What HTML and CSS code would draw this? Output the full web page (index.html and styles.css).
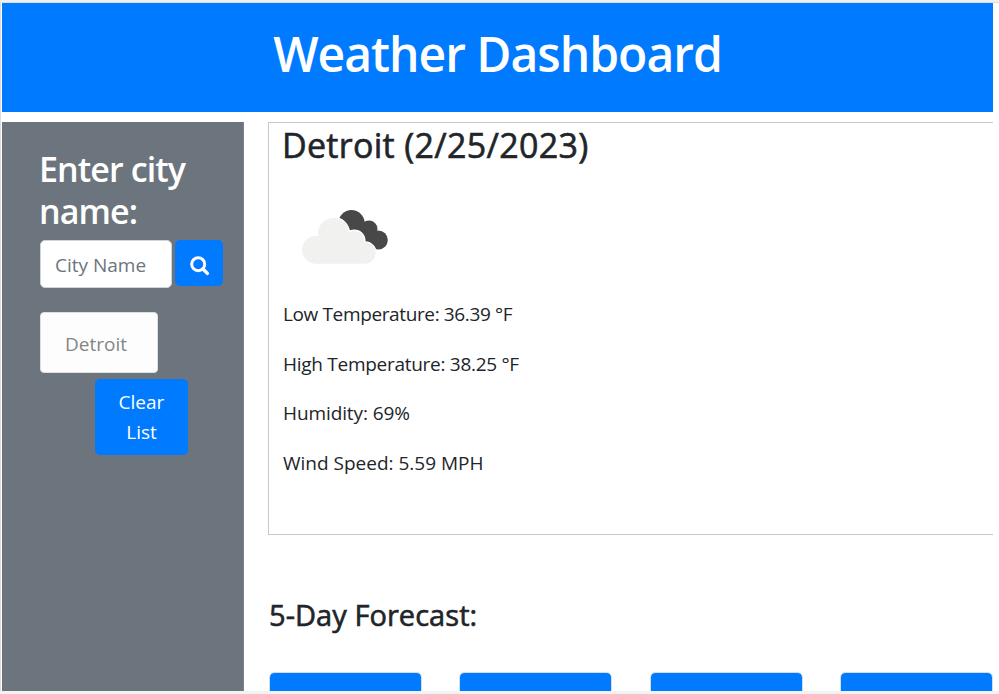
FILE: index.html
```html
<!DOCTYPE html>
<html lang="en">
<head>
<meta charset="utf-8">
<title>Weather Dashboard</title>
<link rel="stylesheet" href="styles.css">
</head>
<body>
<div class="page">
  <header class="banner"><h1>Weather Dashboard</h1></header>
  <div class="columns">
    <aside class="sidebar">
      <h2>Enter city name:</h2>
      <form class="search">
        <input type="text" placeholder="City Name" aria-label="City Name">
        <button type="button" class="btn find" aria-label="Search">
          <svg viewBox="0 0 20 20" width="20" height="20"><circle cx="8.2" cy="8.2" r="6.5" fill="none" stroke="#fff" stroke-width="3"/><path d="M13 13L17.4 17.4" stroke="#fff" stroke-width="3.4" stroke-linecap="round"/></svg>
        </button>
      </form>
      <div class="history">Detroit</div>
      <button type="button" class="btn clear">Clear<br>List</button>
    </aside>
    <main class="main">
      <section class="current">
        <h2>Detroit (2/25/2023)</h2>
        <svg class="cloud" viewBox="300 205 92 62" width="92" height="62">
          <g fill="#484849"><circle cx="351.5" cy="223.3" r="13.2"/><circle cx="369" cy="229" r="8.5"/><circle cx="378.3" cy="240" r="9.5"/><path d="M350 225L369 225L378 238L374 248L350 240Z"/></g>
          <g fill="#f1f1ef" stroke="#fff" stroke-width="1.8"><circle cx="333.5" cy="233.5" r="15.8"/><circle cx="354.3" cy="240.8" r="10.4"/><circle cx="365" cy="253" r="10.8"/></g>
          <g fill="#f1f1ef"><circle cx="316" cy="249.8" r="13.9"/><circle cx="333.5" cy="233.5" r="15.4"/><circle cx="354.3" cy="240.8" r="9.8"/><circle cx="365" cy="253" r="10.7"/><path d="M316 245H362V263.7H316Z"/></g>
        </svg>
        <p class="low">Low Temperature: 36.39 °F</p>
        <p class="high">High Temperature: 38.25 °F</p>
        <p class="humidity">Humidity: 69%</p>
        <p class="wind">Wind Speed: 5.59 MPH</p>
      </section>
      <h3>5-Day Forecast:</h3>
      <div class="cards">
        <div class="card"></div><div class="card"></div><div class="card"></div><div class="card"></div>
      </div>
    </main>
  </div>
</div>
</body>
</html>
```

FILE: styles.css
```css
* { box-sizing: border-box; }
body {
  margin: 0;
  height: 694px;
  overflow: hidden;
  background: #fff;
  color: #212529;
  font: 19px/30px "Open Sans", "Noto Sans", sans-serif;
  border-top: 2px solid #f0f0f0;
  border-bottom: 3px solid #f2f2f2;
}
h1, h2, h3, p { margin: 0; white-space: nowrap; }
h1, h2, h3 { font-weight: 500; }
.page {
  height: 689px;
  overflow: hidden;
  padding: 0 6px 0 1px;
  border-top: 1px solid #ddd;
  border-left: 1px solid #ddd;
}
.banner { height: 109px; padding-top: 21px; background: #007bff; color: #fff; text-align: center; }
.banner h1 { font-size: 48px; line-height: 60px; font-weight: 600; letter-spacing: -1px; }
.columns { display: flex; gap: 24px; height: 569px; margin-top: 10px; }
.sidebar { flex: none; width: 242px; padding: 26px 20px 0 38px; background: #6c757d; border-right: 1px solid #7b838a; }
.sidebar h2 { margin-left: -1px; color: #fff; font-size: 34px; line-height: 42px; font-weight: 600; letter-spacing: -0.9px; white-space: normal; }
.search { display: flex; gap: 3px; margin-top: 8px; }
.search input {
  width: 132px; height: 48px; padding: 2px 14px 0;
  border: 1px solid #ced4da; border-radius: 5px; background: #fff;
  font: inherit;
}
.search input::placeholder { color: #6c757d; opacity: 1; }
.btn { padding: 0; border: 0; border-radius: 5px; background: #007bff; color: #fff; font: inherit; }
.find { width: 49px; height: 46px; display: grid; place-items: center; padding: 5px 0 0 1px; }
.find svg { display: block; }
.history {
  width: 118px; height: 61px; margin-top: 24px; padding: 16px 0 0 24px;
  border: 1px solid #dfdfdf; border-radius: 4px; background: #fdfdfd; color: #848586;
}
.clear { display: block; width: 93px; height: 76px; margin: 6px 0 0 55px; }
.main { flex: 1; min-width: 0; }
.current { height: 413px; padding: 2px 0 0 14px; border: 1px solid #c8c8c8; border-right: 0; }
.current h2 { margin-left: -1px; font-size: 34px; line-height: 41px; letter-spacing: 0.3px; -webkit-text-stroke: 0.6px #212529; }
.cloud { display: block; margin: 39px 0 32px 17px; }
.current p { height: 30px; margin-bottom: 19.7px; }
.low { letter-spacing: -0.37px; }
.high { letter-spacing: -0.28px; }
.humidity { letter-spacing: -0.1px; }
.main h3 { margin-top: 62px; padding-left: 1px; font-size: 29px; line-height: 36px; letter-spacing: 0.05px; -webkit-text-stroke: 0.6px #212529; }
.cards { display: grid; grid-template-columns: repeat(4, 153px); gap: 37.5px; margin-top: 39px; padding-left: 0.5px; }
.card { height: 60px; border: 1px solid #d0dff0; border-radius: 5px; background: #007bff; background-clip: padding-box; }
```
